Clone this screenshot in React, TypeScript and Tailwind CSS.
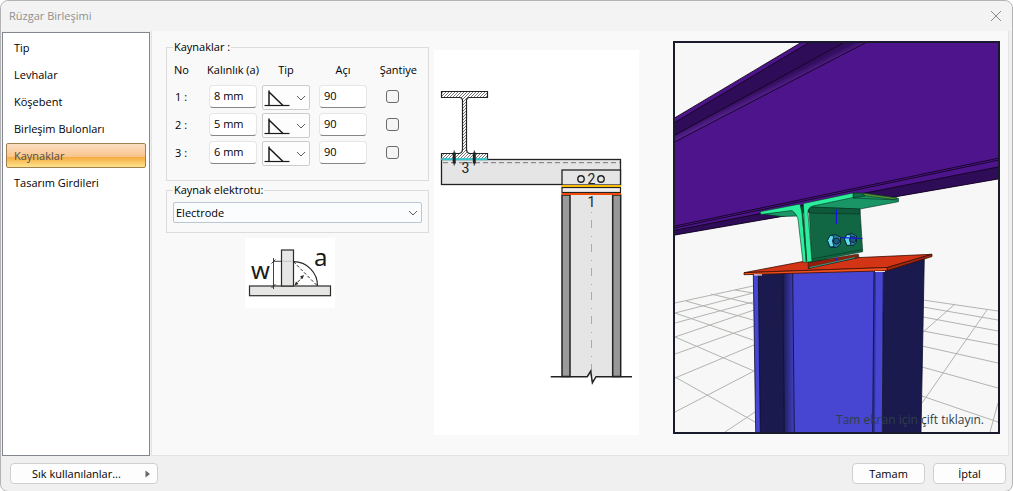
import { useState } from 'react'

const tabs = ['Tip', 'Levhalar', 'Köşebent', 'Birleşim Bulonları', 'Kaynaklar', 'Tasarım Girdileri']

const initialWelds = [
  { no: 1, thickness: '8 mm', angle: '90', site: false },
  { no: 2, thickness: '5 mm', angle: '90', site: false },
  { no: 3, thickness: '6 mm', angle: '90', site: false },
]

function Chevron() {
  return (
    <svg width="10" height="6" viewBox="0 0 10 6" fill="none" stroke="#5c5c5c" className="pointer-events-none absolute right-1">
      <path d="M1 1l4 4 4-4" />
    </svg>
  )
}

function FilletIcon() {
  return (
    <svg width="26" height="18" viewBox="0 0 26 18" fill="none" stroke="#1a1a1a" className="pointer-events-none absolute bottom-0.5 left-0.5">
      <path d="M0.5 15.5h25" strokeWidth="1.2" />
      <path d="M5 0.5v15M5 2l14 13.5" strokeWidth="1.5" />
    </svg>
  )
}

function WeldSymbol() {
  return (
    <svg width="90" height="70" viewBox="0 0 90 70" fill="none" stroke="#2b2b2b" className="bg-white">
      <rect x="4.5" y="48" width="81" height="9.7" fill="#e6e6e4" strokeWidth="1.2" />
      <rect x="36.5" y="12" width="12" height="36" fill="#e6e6e4" strokeWidth="1.2" />
      <path d="M48.5 23.7a24 24 0 0 1 24 24.3" strokeWidth="1.2" />
      <path d="M48.5 23.7l24 24.3" strokeDasharray="3 2" />
      <path d="M28.5 20v31M28.5 23.3h8M26.5 25.5l4-4M26.5 50l4-4" strokeWidth="0.9" />
      <path d="M37 23.3h11" stroke="#bbb" strokeWidth="0.8" />
      <path d="M50 47l8.5-9" strokeDasharray="3 1" />
      <path d="M49.5 47.5l1.5-4 2.5 2.5zM59 37l-4 1.5 2.5 2.5z" fill="#2b2b2b" stroke="none" />
      <g fill="#1a1a1a" stroke="none" fontFamily="'Noto Sans', sans-serif">
        <text x="6" y="41" fontSize="24">w</text>
        <text x="69" y="28" fontSize="24">a</text>
      </g>
    </svg>
  )
}

function SectionDrawing() {
  return (
    <svg width="205" height="385" viewBox="0 0 205 385" fill="none" stroke="#222" className="shrink-0 bg-white">
      <defs>
        <pattern id="hatch" width="3" height="3" patternUnits="userSpaceOnUse">
          <rect width="3" height="3" fill="#fff" stroke="none" />
          <path d="M0 3L3 0" stroke="#555" strokeWidth="0.8" />
        </pattern>
      </defs>
      {/* beam section */}
      <path
        d="M7.5 41.5h46v6h-18.500q-2.500 0.500-2.500 3v49q0 3 3 4h18v6h-46v-6h18q3-1 3-4v-49q0-2.500-2.500-3h-18.500z"
        fill="url(#hatch)"
        strokeWidth="1.2"
      />
      {/* angle */}
      <rect x="7.5" y="109.5" width="179" height="25" fill="#e5e5e5" strokeWidth="1.3" />
      <path d="M9 112.700h177" stroke="#777" strokeDasharray="5 3" />
      <path d="M7 109.300h46.500" stroke="#2fc6cb" strokeWidth="2" />
      <path d="M20.200 102.500v11M40.300 102.500v11" strokeWidth="3" />
      <path d="M20.200 100.500v15M40.300 100.500v15" strokeWidth="1" />
      {/* column */}
      <rect x="128" y="145" width="58.500" height="181.500" fill="#e5e5e5" stroke="none" />
      <rect x="128" y="145" width="8" height="181.500" fill="#9a9b9b" strokeWidth="1.500" />
      <rect x="178.700" y="145" width="8" height="181.500" fill="#9a9896" strokeWidth="1.500" />
      <path d="M157.500 162v175" stroke="#aaa" strokeDasharray="1 7 8 8" />
      {/* end plates and weld lines */}
      <rect x="128" y="120" width="58.500" height="15" fill="#e5e5e5" strokeWidth="1.300" />
      <rect x="128" y="137.500" width="58.500" height="5" fill="#eee" strokeWidth="1.200" />
      <path d="M127.500 136h59.500" stroke="#fbbc0a" strokeWidth="2" />
      <path d="M127.500 144h59.500" stroke="#f24a08" strokeWidth="2" />
      <circle cx="147" cy="129" r="3.200" strokeWidth="1.400" />
      <circle cx="167" cy="129" r="3.200" strokeWidth="1.400" />
      <path d="M116.700 326.700h36.500l3.500-5.500 1.700 11.500 3.600-6h36" strokeWidth="1.500" />
      <g fill="#222" stroke="none" fontSize="14" textAnchor="middle" fontFamily="Roboto, sans-serif">
        <text x="31.500" y="123">3</text>
        <text x="157.500" y="134">2</text>
        <text x="157.500" y="157">1</text>
      </g>
    </svg>
  )
}

function ModelView() {
  return (
    <svg viewBox="0 0 323 389" preserveAspectRatio="xMidYMid slice" className="block h-full w-full" strokeLinejoin="round">
      <defs>
        <linearGradient id="beamFillet" gradientUnits="userSpaceOnUse" x1="60" y1="59" x2="64" y2="67">
          <stop offset="0" stopColor="#330d5e" />
          <stop offset="1" stopColor="#5c2699" />
        </linearGradient>
        <linearGradient id="columnFillet">
          <stop offset="0" stopColor="#1b1a4f" />
          <stop offset="1" stopColor="#4141c4" />
        </linearGradient>
      </defs>
      <rect width="323" height="389" fill="#f7f7f7" />

      {/* ground grid */}
      <path
        d="M0 260L78 243M0 270L78 250M0 280L78 259M0 294L79 267M0 311L79 283M0 335L79 302M0 369L79 328M50 389L80 369
           M11 258L78 277M36 251L78 261M60 247L78 250M0 270L78 297M0 294L79 328M0 334L80 379
           M248 257L323 268M248 264L323 277M248 274L323 288M248 288L323 302M247 303L323 320M247 324L323 345M247 353L323 379
           M280 261L247 290M312 267L247 360M323 360L315 389"
        fill="none"
        stroke="#b0b4ae"
      />

      {/* beam */}
      <path d="M0 74.700L127-1H323V136L0 192z" fill="#4e148c" />
      <path d="M0 79.300L135-1H170L0 92z" fill="#2f0c57" />
      <path d="M0 92L170-1H192L0 98.700z" fill="url(#beamFillet)" />
      <path d="M0 187.300L323 124V136L0 192z" fill="#2f0c57" />
      <path
        d="M0 74.700L127-1M0 79.300L135-1M0 92L170-1M0 98.700L192-1M0 183L323 115.300M0 184.800L323 117.200M0 187.300L323 124M0 192L323 136"
        fill="none"
        stroke="#12041f"
        strokeWidth="0.900"
      />

      {/* column */}
      <path d="M78.300 230L208.300 226L207.300 389H80.700z" fill="#4646d2" />
      <path d="M83.300 230L107.700 229L109.300 389H85.300z" fill="#1b1a4f" />
      <path d="M107.700 229H117.700L119.300 389H109.300z" fill="url(#columnFillet)" />
      <path d="M199 227H201L200 389H197.700z" fill="#3232a0" />
      <path d="M208.300 226L249.300 214L246 389H207.300z" fill="#1b1a4f" />
      <path
        d="M78.300 230L80.700 389M83.300 230L85.300 389M107.700 229L109.300 389M117.700 229L119.300 389M199 227L197.700 389M208.300 226L207.300 389M249.300 214L246 389"
        fill="none"
        stroke="#0c0c2b"
        strokeWidth="0.800"
      />

      {/* cap plate */}
      <g stroke="#3a0d03" strokeWidth="0.800">
        <path d="M69 229.700L128 218.500L185 214.500L257 211.300L212.300 224.500z" fill="#d23415" />
        <path d="M69 229.700L212.300 224.500V227.700L69 231.700z" fill="#f2501f" />
        <path d="M212.300 224.500L257 211.300V213.500L212.300 227.700z" fill="#a32a10" />
      </g>
      <path d="M79 231.800h8M200 228.500h10" stroke="#e8d8dc" strokeWidth="1.200" />

      {/* angles */}
      <g stroke="#07301f" strokeWidth="0.600">
        <path d="M133 219.300L183.300 211L184 214.500L133.300 225.500z" fill="#8f1f0d" />
        <path d="M86 171L121 166L123 173L107 173.500z" fill="#1a9566" />
        <path d="M85 168.700L125 161L127 170L131.500 217L131 219.300H128L123 176Q122 171 117 167.500L86 171.500z" fill="#2bef9d" />
        <path d="M134 163L185 166L187.700 208.700L136.700 218.700z" fill="#116644" />
        <path d="M178 150L190 150.300L223.500 155.300V158.700L185 166L134 164z" fill="#1a9566" />
        <path d="M134 164L185 166L184.500 171L134 170z" fill="#0f5a3c" />
        <path d="M178 150L186 150L190 153L178 155z" fill="#0f6b48" />
        <path d="M189 150.300L222 155L219 156.500L189 152.500z" fill="#5a9c33" />
        <path d="M128.300 160.500L178 150V154.500L138 163Q132.500 164.500 133 170L137 218.500L131.500 219.300z" fill="#2bef9d" />
        <path d="M137 216L187.500 206.500M178 155L223 157M133 225.500L181 215" fill="none" />
      </g>
      <path d="M127 163L131.500 218" stroke="#0b4a33" strokeWidth="1.500" />
      <path d="M135 224.500L180 214.500" stroke="#2c9a8e" strokeWidth="1" />

      {/* bolts */}
      <g stroke="#062433" strokeWidth="0.900">
        <path d="M152.500 197.500L155 192.500L160 191.500L165.500 194V201L161.500 204.500L155 204z" fill="#2a7ea3" />
        <path d="M152.500 197.500L155 192.500L159 193L157.500 198L159 203.500L155 204z" fill="#63dcf2" />
        <circle cx="161.500" cy="198" r="3" fill="#1d5a80" />
        <path d="M169.500 196L172 191.500L177 190.500L181.500 193V199.500L178 202.500L172 202.500z" fill="#2a7ea3" />
        <path d="M169.500 196L172 191.500L176 192L174.500 196.500L176 202L172 202.500z" fill="#63dcf2" />
        <circle cx="178" cy="196.500" r="3" fill="#1d5a80" />
      </g>
      <path d="M161.500 166.500V181M166 194.700L187.500 195.500M161.500 215V217.500" stroke="#1414e8" strokeWidth="1.200" />
    </svg>
  )
}

const buttonClass = 'h-[21px] rounded border border-[#cfcfcf] bg-[#fdfdfd] hover:bg-white'
const inputClass = 'h-[23px] w-12 rounded-sm border border-[#e6e6e6] border-b-[#868686] bg-white px-1 pb-0.5 outline-none'

export default function App() {
  const [activeTab, setActiveTab] = useState('Kaynaklar')
  const [welds, setWelds] = useState(initialWelds)

  const updateWeld = (no: number, patch: any) => {
    setWelds(welds.map((w) => (w.no === no ? { ...w, ...patch } : w)))
  }

  return (
    <div className="flex min-h-screen flex-col rounded-lg border border-[#b4b4b4] bg-[#f0f0f0] font-['Open_Sans',sans-serif] text-[11px] leading-4 text-black">
      <header className="flex h-[30px] items-center justify-between rounded-t-lg bg-[#f3f3f3] pr-2.5 pl-2">
        <h1 className="text-[#8f8f8f]">Rüzgar Birleşimi</h1>
        <button aria-label="Kapat">
          <svg width="12" height="12" viewBox="0 0 12 12" stroke="#8a8a8a" fill="none">
            <path d="M1 1l10 10M11 1L1 11" />
          </svg>
        </button>
      </header>

      <main className="flex flex-1 pr-[3px] pl-px">
        <nav className="mt-px flex w-[148px] shrink-0 flex-col gap-0.5 border border-[#828790] bg-white px-[3px] py-0.5">
          {tabs.map((tab) => (
            <button
              key={tab}
              onClick={() => setActiveTab(tab)}
              className={`h-[25px] rounded-xs border px-[7px] text-left ${
                activeTab === tab
                  ? 'border-[#a08050] bg-[linear-gradient(#fbdfc4,#f9c48a_55%,#f6a93f_56%,#fde48c)] text-[#4f4f4f]'
                  : 'border-transparent'
              }`}
            >
              {tab}
            </button>
          ))}
        </nav>

        <section className="ml-px flex flex-1 items-start border border-t-0 border-[#e3e3e3] bg-[#f9f9f9] pr-2 pb-5 pl-3.5">
          <div className="mt-2 w-[263px] shrink-0">
            <fieldset className="border border-[#dcdcdc] px-1.5 pb-[11px]">
              <legend className="px-px">Kaynaklar :</legend>
              <div className="grid grid-cols-[35px_53px_57px_48px_50px] pl-px">
                <div className="flex h-[30px] items-center">No</div>
                <div className="flex h-[30px] w-12 items-center justify-center whitespace-nowrap">Kalınlık (a)</div>
                <div className="flex h-[30px] w-12 items-center justify-center">Tip</div>
                <div className="flex h-[30px] w-12 items-center justify-center">Açı</div>
                <div className="flex h-[30px] items-center justify-end">Şantiye</div>
                {welds.map((weld) => (
                  <div key={weld.no} className="col-span-5 grid h-7 grid-cols-subgrid items-start">
                    <span className="px-px leading-[23px]">{weld.no} :</span>
                    <input
                      type="text"
                      aria-label={`Kalınlık ${weld.no}`}
                      value={weld.thickness}
                      onChange={(e) => updateWeld(weld.no, { thickness: e.target.value })}
                      className={inputClass}
                    />
                    <div className="relative flex h-[25px] w-12 items-center">
                      <select
                        aria-label={`Tip ${weld.no}`}
                        className="h-full w-full appearance-none rounded-xs border border-[#cccccc] bg-[#fdfdfd]"
                      >
                        <option value="fillet" aria-label="Köşe kaynak" />
                      </select>
                      <FilletIcon />
                      <Chevron />
                    </div>
                    <input
                      type="text"
                      aria-label={`Açı ${weld.no}`}
                      value={weld.angle}
                      onChange={(e) => updateWeld(weld.no, { angle: e.target.value })}
                      className={inputClass}
                    />
                    <div className="flex h-[23px] items-center justify-center">
                      <input
                        type="checkbox"
                        aria-label={`Şantiye ${weld.no}`}
                        checked={weld.site}
                        onChange={(e) => updateWeld(weld.no, { site: e.target.checked })}
                        className="size-[13px] appearance-none rounded-[3px] border border-[#6b6b6b] bg-[#f5f5f5] checked:bg-[#005fb8]"
                      />
                    </div>
                  </div>
                ))}
              </div>
            </fieldset>

            <fieldset className="mt-px border border-[#dcdcdc] px-1.5 pt-1 pb-[9px]">
              <legend className="px-px">
                <label htmlFor="electrode">Kaynak elektrotu:</label>
              </legend>
              <div className="relative flex items-center">
                <select
                  id="electrode"
                  className="h-[21px] w-full appearance-none rounded-xs border border-[#bcc7d3] bg-[#fbfcfe] px-0.5"
                >
                  <option>Electrode</option>
                </select>
                <Chevron />
              </div>
            </fieldset>

            <div className="mt-[5px] ml-[79px]">
              <WeldSymbol />
            </div>
          </div>

          <div className="mt-[19px] ml-[5px]">
            <SectionDrawing />
          </div>

          <div className="relative mt-2.5 ml-[34px] h-[393px] flex-1 border-2 border-[#1a1a2e]">
            <ModelView />
            <p className="absolute right-3.5 bottom-1 text-xs text-[#2f3f45]">Tam ekran için çift tıklayın.</p>
          </div>
        </section>
      </main>

      <footer className="flex h-[35px] items-center gap-2 pr-1.5 pl-[9px]">
        <button className={`${buttonClass} mr-auto flex w-[148px] items-center justify-between pr-1.5 pl-[21px]`}>
          Sık kullanılanlar...
          <svg width="6" height="8" viewBox="0 0 6 8" fill="#666">
            <path d="M0.5 0.5v7l4.500-3.500z" />
          </svg>
        </button>
        <button className={`${buttonClass} w-[73px]`}>Tamam</button>
        <button className={`${buttonClass} w-[73px]`}>İptal</button>
      </footer>
    </div>
  )
}
